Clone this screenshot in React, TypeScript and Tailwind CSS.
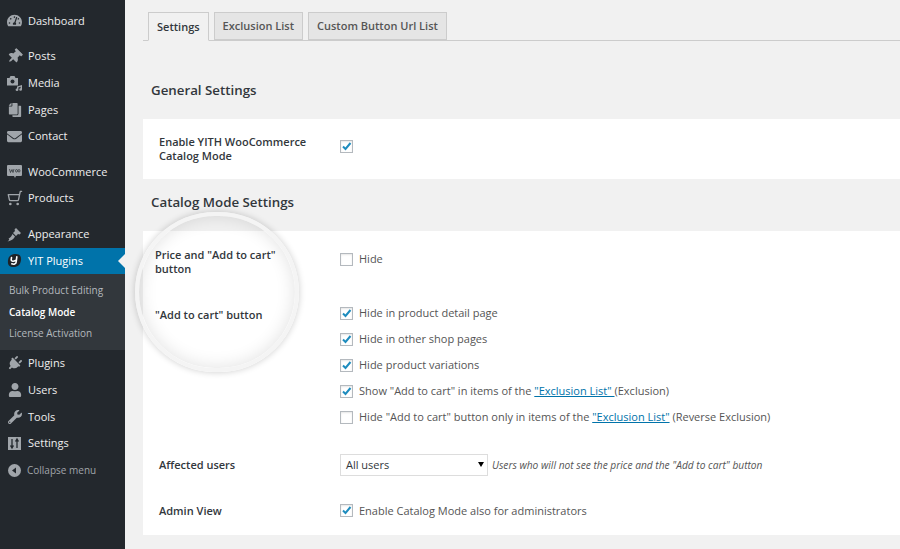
import type { ReactNode } from "react";
import { ShoppingCart } from "lucide-react";
import {
  FaCopy,
  FaEnvelope,
  FaPlug,
  FaTachometerAlt,
  FaThumbtack,
  FaUser,
  FaWrench,
} from "react-icons/fa";

function MediaIcon() {
  return (
    <svg width="16" height="16" viewBox="0 0 16 16" fill="currentColor">
      <path d="M0 3h2.500l1-2h4l1 2H11v7.500H0z" />
      <circle cx="5.500" cy="6.500" r="2" fill="#23282d" />
      <path d="M10 11.500l5-1.500v4.500a1.400 1.300 0 1 1-1.400-1.300v-1.500l-2.200.7v2.300a1.400 1.300 0 1 1-1.400-1.300z" />
    </svg>
  );
}

function WooIcon() {
  return (
    <svg width="15" height="15" viewBox="0 0 15 15">
      <path d="M1 1h13a1 1 0 0 1 1 1v9a1 1 0 0 1-1 1H9l-1 2-1-2H1a1 1 0 0 1-1-1V2a1 1 0 0 1 1-1z" fill="currentColor" />
      <path d="M2.500 5l1 3.500L5 5.500l1 3 1-3.500M8.500 6.800a1 1.300 0 1 0 2 0a1 1.300 0 1 0-2 0M11 6.800a1 1.300 0 1 0 2 0a1 1.300 0 1 0-2 0" fill="none" stroke="#23282d" strokeWidth="0.700" />
    </svg>
  );
}

function BrushIcon() {
  return (
    <svg width="15" height="15" viewBox="0 0 15 15" fill="currentColor">
      <path d="M9 1l5 5-1.500 1.500-1.500-.5-2 2-3-3 2-2-.5-1.500z" />
      <path d="M5.500 7l2.500 2.500C7 12 4 14 .5 14.500 2.500 13 2.500 12 1.500 11.500 3.500 11 4.500 9 5.500 7z" />
    </svg>
  );
}

function YitIcon() {
  return (
    <svg width="15" height="15" viewBox="0 0 15 15">
      <path d="M7.500 1C12 .5 14.500 2.500 14 7c-.5 4.500-3 7-7.500 7C2 14 .5 11.500 1 7.500 1.500 3.500 3.500 1.500 7.500 1z" fill="#1f2328" />
      <path d="M4.500 4.500l-.3 2.500c0 1.400 2.500 1.600 4.300.5M9.800 3.800 9.200 9c-.2 2-2.400 2.700-4.400 1.800" fill="none" stroke="#fff" strokeWidth="1.600" strokeLinecap="round" />
    </svg>
  );
}

function SettingsIcon() {
  return (
    <svg width="13" height="13" viewBox="0 0 13 13">
      <rect width="13" height="13" fill="currentColor" />
      <path d="M4 2v9M2.500 8.500L4 11l1.500-2.500M9 11V2M7.500 4.500L9 2l1.500 2.500" fill="none" stroke="#23282d" strokeWidth="1.300" />
    </svg>
  );
}

function CollapseIcon() {
  return (
    <svg width="13" height="13" viewBox="0 0 13 13">
      <circle cx="6.500" cy="6.500" r="6.500" fill="currentColor" />
      <path d="M8 3.500v6L4 6.500z" fill="#23282d" />
    </svg>
  );
}

function MenuItem({ icon, label, active }: { icon: ReactNode; label: string; active?: boolean }) {
  return (
    <div
      className={`relative flex h-[26.7px] items-center text-[11px] ${
        active ? "bg-[#0073aa] text-white" : "text-[#eeeeee]"
      }`}
    >
      <span className={`flex w-[28px] shrink-0 justify-center pl-[1px] ${active ? "text-white" : "text-[#a0a5aa]"}`}>
        {icon}
      </span>
      <span>{label}</span>
      {active && (
        <span className="absolute right-0 top-1/2 h-0 w-0 -translate-y-1/2 border-y-[7px] border-r-[7px] border-y-transparent border-r-[#f1f1f1]" />
      )}
    </div>
  );
}

function Sidebar() {
  return (
    <aside className="h-full w-[125px] shrink-0 bg-[#23282d] pt-[7.500px]">
      <MenuItem icon={<FaTachometerAlt size={15} />} label="Dashboard" />
      <div className="mt-[9px]">
        <MenuItem icon={<FaThumbtack size={15} className="rotate-45" />} label="Posts" />
        <MenuItem icon={<MediaIcon />} label="Media" />
        <MenuItem icon={<FaCopy size={14} className="-scale-x-100" />} label="Pages" />
        <MenuItem icon={<FaEnvelope size={15} />} label="Contact" />
      </div>
      <div className="mt-[8.500px]">
        <MenuItem icon={<WooIcon />} label="WooCommerce" />
        <MenuItem icon={<ShoppingCart size={16} className="-scale-x-100" />} label="Products" />
      </div>
      <div className="mt-[9px]">
        <MenuItem icon={<BrushIcon />} label="Appearance" />
        <MenuItem icon={<YitIcon />} label="YIT Plugins" active />
      </div>
      <div className="flex h-[76px] flex-col justify-center gap-[7px] bg-[#32373c] pl-[9px] text-[10px] leading-[14.500px] text-[#b4b9be]">
        <div>Bulk Product Editing</div>
        <div className="font-semibold text-white">Catalog Mode</div>
        <div>License Activation</div>
      </div>
      <MenuItem icon={<FaPlug size={15} className="rotate-45" />} label="Plugins" />
      <MenuItem icon={<FaUser size={14} />} label="Users" />
      <MenuItem icon={<FaWrench size={14} />} label="Tools" />
      <MenuItem icon={<SettingsIcon />} label="Settings" />
      <div className="flex h-[26.7px] items-center text-[10px] text-[#a0a5aa]">
        <span className="flex w-[27px] shrink-0 justify-center pl-[1px]">
          <CollapseIcon />
        </span>
        <span>Collapse menu</span>
      </div>
    </aside>
  );
}

function Tab({ label, active }: { label: string; active?: boolean }) {
  return (
    <div
      className={`flex items-center border border-[#cccccc] px-[8px] pt-[1px] text-[11px] font-semibold ${
        active ? "-mb-px h-[29px] border-b-[#f1f1f1] bg-[#f1f1f1] text-[#32373c]" : "h-[28px] bg-[#e5e5e5] text-[#555555]"
      }`}
    >
      {label}
    </div>
  );
}

function Checkbox({ checked }: { checked?: boolean }) {
  return (
    <span className="flex h-[13px] w-[13px] shrink-0 items-center justify-center border border-[#b4b9be] bg-white shadow-[inset_0_1px_2px_rgba(0,0,0,0.1)]">
      {checked && (
        <svg width="11" height="11" viewBox="0 0 11 11">
          <path d="M2 5.500l2.500 2.500L9.500 2" fill="none" stroke="#1e8cbe" strokeWidth="2" />
        </svg>
      )}
    </span>
  );
}

function Option({ checked, children }: { checked?: boolean; children: ReactNode }) {
  return (
    <div className="flex h-[26px] items-center gap-[6px] text-[11px] text-[#555555]">
      <Checkbox checked={checked} />
      <span className="whitespace-pre">{children}</span>
    </div>
  );
}

function Content() {
  return (
    <main className="relative h-full min-w-0 flex-1 bg-[#f1f1f1] pl-[18px]">
      <div className="flex h-[41px] items-end gap-[5px] border-b border-[#cccccc] pl-[5px]">
        <Tab label="Settings" active />
        <Tab label="Exclusion List" />
        <Tab label="Custom Button Url List" />
      </div>

      <h2 className="mt-[40px] h-[38px] pl-[8px] text-[13.300px] leading-[19px] font-semibold text-[#32373c]">General Settings</h2>

      <section className="flex h-[60px] items-center bg-white text-[11px] font-semibold leading-[14px] text-[#32373c]">
        <div className="w-[197px] pl-[16px]">
          Enable YITH WooCommerce
          <br />
          Catalog Mode
        </div>
        <div className="-mt-[6px]">
          <Checkbox checked />
        </div>
      </section>

      <h2 className="h-[52px] pl-[8px] pt-[14px] text-[13.300px] leading-[19px] font-semibold text-[#32373c]">Catalog Mode Settings</h2>

      <section className="relative h-[304px] bg-white text-[11px] font-semibold leading-[14px] text-[#32373c]">
        <div className="relative z-10 flex h-[69px] pt-[17px]">
          <div className="w-[197px] pl-[12px]">
            Price and "Add to cart"
            <br />
            button
          </div>
          <div className="-mt-[2px] font-normal">
            <Option>Hide</Option>
          </div>
        </div>
        <div className="relative z-10 flex h-[145px]">
          <div className="w-[197px] pl-[12px] pt-[8px]">"Add to cart" button</div>
          <div className="font-normal">
            <Option checked>Hide in product detail page</Option>
            <Option checked>Hide in other shop pages</Option>
            <Option checked>Hide product variations</Option>
            <Option checked>
              Show "Add to cart" in items of the <a className="text-[#0073aa] underline">"Exclusion List" </a>(Exclusion)
            </Option>
            <Option>
              Hide "Add to cart" button only in items of the <a className="text-[#0073aa] underline">"Exclusion List"</a> (Reverse Exclusion)
            </Option>
          </div>
        </div>
        <div className="-mt-[1px] flex h-[41px] items-center">
          <div className="w-[197px] pl-[16px]">Affected users</div>
          <div className="flex items-center gap-[4px]">
            <div className="flex h-[22px] w-[148px] items-center justify-between border border-[#dddddd] pl-[5px] pr-[3px] text-[11px] font-normal text-[#32373c]">
              All users
              <span className="h-0 w-0 border-x-[3px] border-t-[5px] border-x-transparent border-t-black" />
            </div>
            <span className="text-[10.200px] italic font-normal text-[#555555]">
              Users who will not see the price and the "Add to cart" button
            </span>
          </div>
        </div>
        <div className="mt-[1px] flex h-[49px] items-center">
          <div className="w-[197px] pl-[16px] pt-[1px]">Admin View</div>
          <div className="font-normal">
            <Option checked>Enable Catalog Mode also for administrators</Option>
          </div>
        </div>
      </section>

      {/* magnifier ring over the two labels */}
      <div className="pointer-events-none absolute left-[10px] top-[212px] h-[160px] w-[164px] rounded-full border-[4px] border-[#f4f4f4] shadow-[0_0_7px_rgba(0,0,0,0.2),inset_0_0_18px_rgba(0,0,0,0.12)]" />
    </main>
  );
}

export default function App() {
  return (
    <div className="flex h-[549px] w-[900px] overflow-hidden font-['Open_Sans',sans-serif]">
      <Sidebar />
      <Content />
    </div>
  );
}
